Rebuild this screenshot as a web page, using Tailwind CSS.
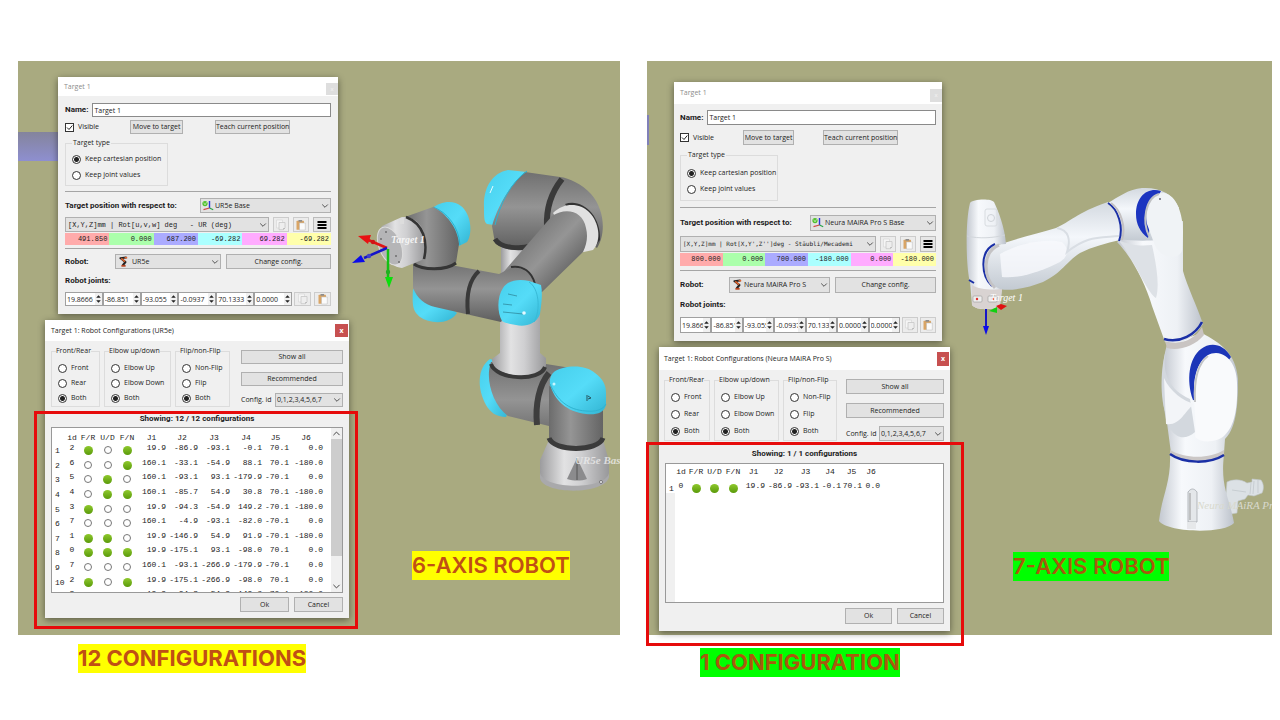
<!DOCTYPE html>
<html lang="en">
<head>
    <meta charset="UTF-8">
    <meta name="viewport" content="width=device-width, initial-scale=1.0">
    <title>6-axis vs 7-axis robot configurations</title>
    <script src="https://cdn.jsdelivr.net/npm/@tailwindcss/browser@4"></script>
</head>
<body class="bg-white font-['Open_Sans',sans-serif] text-[7px] leading-[10px] text-[#1c1c1c]">

    <!-- Shared icons -->
    <svg class="hidden">
        <symbol id="chevron" viewBox="0 0 8 8"><path d="M1.2 2.5 4 5.3 6.8 2.5" fill="none" stroke="#444" stroke-width=".9"/></symbol>
        <symbol id="frame" viewBox="0 0 12 11">
            <path d="M7.5 1v7" stroke="#2a35d8" stroke-width="1.4"/><path d="M7.5 8 1.5 9.6" stroke="#d04848" stroke-width="1.1"/><path d="M7.5 8l3.7 1.7" stroke="#27a348" stroke-width="1.2"/>
            <circle cx="3" cy="3.6" r="2.6" fill="#4fc02c"/><path d="M1.7 2.6 3 4.9l1.6-2.7" fill="none" stroke="#d9f5cf" stroke-width=".7"/>
        </symbol>
        <symbol id="arm" viewBox="0 0 10 11">
            <path d="M1.4 2.2 7 1.5M2 2.5l4.5 3.6M6.5 6 4 9" fill="none" stroke="#222" stroke-width="2" stroke-linecap="round"/>
            <path d="M2.2 2.4 6 5.6" stroke="#e2622b" stroke-width="1.5"/><path d="M5.6 1.7h2.6" stroke="#e2622b" stroke-width="1.5"/><path d="M2.4 9.8h4.2" stroke="#b5401c" stroke-width="1.8"/>
        </symbol>
        <symbol id="copy" viewBox="0 0 12 12">
            <path d="M1.5 1h6v8h-6z" fill="#f5f5f5" stroke="#d9d9d9" stroke-width=".7"/><path d="M4 3.5h6V9l-1.6 1.7H4z" fill="#eee" stroke="#c6c6c6" stroke-width=".8"/><path d="M10 9H8.4v1.7z" fill="#aaa"/>
        </symbol>
        <symbol id="paste" viewBox="0 0 12 12">
            <rect x="1.5" y="1.8" width="7.5" height="9" rx=".6" fill="#d9a566"/><path d="M3.5 1h3.6v1.7H3.5z" fill="#8d8d8d"/><path d="M4.5 4h5.8v7H4.5z" fill="#fbfbfb" stroke="#b9b9b9" stroke-width=".5"/>
        </symbol>
        <symbol id="bars" viewBox="0 0 12 12"><path d="M1.5 3h9M1.5 6h9M1.5 9h9" stroke="#000" stroke-width="2"/></symbol>
        <symbol id="spin" viewBox="0 0 7 12"><path d="M3.5 2.2 5.8 4.8H1.2zM3.5 9.8 5.8 7.2H1.2z" fill="#222"/></symbol>
    </svg>

    <main class="grid grid-cols-[602fr_625fr] gap-x-[27px] pt-[61px] pl-[18px] pr-2">

        <!-- 6-axis robot -->
        <figure>
            <div class="relative h-[574px] bg-[#a9aa80]">
                <svg class="absolute inset-0 size-full" viewBox="18 61 602 574" preserveAspectRatio="xMinYMin slice">
                    <defs>
                        <linearGradient id="beam" x1="0" y1="0" x2="0" y2="1"><stop offset="0" stop-color="#84849c"/><stop offset="1" stop-color="#8e8fd0"/></linearGradient>
                        <linearGradient id="steel"><stop offset="0" stop-color="#9c9c9e"/><stop offset=".35" stop-color="#e2e2e3"/><stop offset=".6" stop-color="#cfcfd1"/><stop offset="1" stop-color="#98989a"/></linearGradient>
                        <linearGradient id="dark"><stop offset="0" stop-color="#6c6c6c"/><stop offset=".4" stop-color="#959595"/><stop offset="1" stop-color="#646464"/></linearGradient>
                        <linearGradient id="darkV" x1="0" y1="0" x2="0" y2="1"><stop offset="0" stop-color="#707070"/><stop offset=".45" stop-color="#949494"/><stop offset="1" stop-color="#5e5e5e"/></linearGradient>
                        <linearGradient id="tube" gradientUnits="userSpaceOnUse" x1="524" y1="240" x2="562" y2="276"><stop offset="0" stop-color="#7c7c7c"/><stop offset=".5" stop-color="#959595"/><stop offset="1" stop-color="#6c6c6c"/></linearGradient>
                        <linearGradient id="cyan" x1="0" y1="0" x2="1" y2="1"><stop offset="0" stop-color="#46cfec"/><stop offset=".5" stop-color="#55dcf8"/><stop offset="1" stop-color="#32b4d2"/></linearGradient>
                    </defs>
                    <path d="M18 132h42v29H18z" fill="url(#beam)"/>

                    <!-- base and shoulder -->
                    <path d="M549 440 540 460v18c3 16 66 16 69-2v-15l-6-21z" fill="url(#steel)"/>
                    <path d="M540 473c4 17 66 17 69 0v4c-4 18-66 18-69 1z" fill="#a9a9ab"/>
                    <path d="M577 458 567 479c7 2 14 2 20 0z" fill="#8b8b8d"/><path d="M577 458v22" stroke="#555"/><circle cx="601" cy="482" r="1.5" fill="#eee" stroke="#444" stroke-width=".6"/>
                    <path d="M490 359c-13 9-13 30-4 46 4 7 10 12 20 12l4-10-14-46z" fill="url(#cyan)"/>
                    <path d="M491 362c-6 16 1 42 17 54l41 10v12c4 11 50 11 54 0v-40l-32-30-25-4z" fill="url(#darkV)"/>
                    <path d="M549 386v52c4 11 50 11 54 0v-33l-30-12z" fill="url(#dark)"/>
                    <path d="M549 438c5 14 49 14 54 0" fill="none" stroke="#3b3b3b" stroke-width="5"/>
                    <path d="M549 373c-10 12-14 32-12 52" fill="none" stroke="#3e3e3e" stroke-width="6"/>
                    <path d="M550 384c-1-8 3-14 13-16 13-3 25-1 32 5 8 6 11 12 11 20v11c-1 10-12 11-20 10-19-2-32-14-36-30z" fill="url(#cyan)"/>
                    <path d="M550 384c7 16 18 26 36 27 9 1 17-1 20-7" fill="none" stroke="#2fb3d0"/>
                    <path d="M587 395v6M588 396l3 2-3 1" fill="none" stroke="#24545f"/><circle cx="554" cy="384" r="1.5" fill="#c8f6ff"/>

                    <!-- lower arm -->
                    <path d="M500 315v38l-8 6c-2 20 52 22 54 6v-7l-6-5v-40z" fill="url(#steel)"/>
                    <path d="M491 364c5 16 49 18 54 3" fill="none" stroke="#393939" stroke-width="4"/>
                    <path d="M501 243v34h27v-30z" fill="url(#steel)"/>

                    <!-- elbow -->
                    <path d="M508 170c-16 3-25 18-24 38 0 9 0 14 3 16l14 2 26-54z" fill="url(#cyan)"/>
                    <path d="M525 172c-14 12-27 33-33 54l3 17c10 9 30 8 38 4l24-28 40 29c9-14 8-38-6-54-9-10-22-16-31-17z" fill="url(#darkV)"/>
                    <path d="M562 179c-12 15-16 30-15 48" fill="none" stroke="#3a3a3a" stroke-width="6"/>
                    <path d="M495 239c6 10 26 10 36 7" fill="none" stroke="#383838" stroke-width="5"/>
                    <path d="M565 204c16-6 36 10 35 36l-4 5-20-26z" fill="#333"/>
                    <path d="M553 213c11-11 27-10 36-1 10 10 13 28 4 38l-14 3z" fill="#e1e1e1"/>
                    <path d="M552 216c14-9 31-5 34 12 2 8 1 16-3 24l-41 40-8 4-34-20z" fill="url(#tube)"/>
                    <path d="M527 171c-16 11-27 33-32 54" fill="none" stroke="#29b4d2"/><path d="M490 193l3-7" stroke="#e6fbff"/>

                    <!-- wrist -->
                    <path d="M413 289c-1 18 0 22 7 28 10 7 29 8 37-4l-14-12z" fill="url(#cyan)"/>
                    <path d="M413 264v24c4 10 12 17 22 19l66 15 6-10 28-28c-5-14-16-17-24-16l-12 6-43-8-43-4z" fill="url(#darkV)"/>
                    <path d="M511 267c12-2 21 5 24 17" fill="none" stroke="#333" stroke-width="2"/>
                    <path d="M479 271c-10 9-13 24-11 43" fill="none" stroke="#393939" stroke-width="4"/>
                    <path d="M502 321c-5-9-5-24 1-33 5-8 16-9 26-7l12 4c2 9 0 22-1 29-4 11-16 13-24 11-6-1-11-2-14-4z" fill="url(#cyan)"/>
                    <path d="M508 294l9 2M503 304l9 1M503 312l20 2" stroke="#2b7f92" stroke-width=".7"/><circle cx="524" cy="313" r="1.8" fill="#e5f9ff"/>
                    <path d="M529 282c10 6 12 28 5 40" fill="none" stroke="#38bad7"/>
                    <path d="M433 208c6-6 20-9 28-2 10 8 12 27 6 36l-8 4z" fill="url(#cyan)"/>
                    <path d="M433 207c14 5 26 20 27 38" fill="none" stroke="#2bb0cd"/>
                    <path d="M405 217l28-10c13 6 25 21 26 37l-3 19c-6 8-34 9-43 1v-6z" fill="url(#dark)"/>
                    <path d="M414 264c8 6 32 7 42-1" fill="none" stroke="#353535" stroke-width="3"/>
                    <path d="M382 226l20-9c13-1 22 9 23 21 1 9 0 17-3 22l-20 8c-16-1-30-28-20-42z" fill="url(#steel)"/>
                    <path d="M406 217c18 7 22 25 18 42" fill="none" stroke="#353535" stroke-width="2.5"/>
                    <path d="M400 218h4v6h-4z" fill="#ddd"/>
                    <ellipse cx="390" cy="246" rx="11" ry="20" transform="rotate(-22 390 246)" fill="#b5b5b7" stroke="#ddd"/>
                    <g fill="#6f6f6f"><circle cx="386" cy="232" r="1"/><circle cx="381" cy="239" r="1"/><circle cx="396" cy="256" r="1"/><circle cx="399" cy="262" r="1"/></g>

                    <!-- target axes -->
                    <path d="M387 248 366 239" stroke="#e01515" stroke-width="2.5"/><circle cx="373" cy="242" r="2.2" fill="#d01515"/><path d="M358 236l13-1-3 9z" fill="#e81212"/>
                    <path d="M387 248 364 258" stroke="#1515c8" stroke-width="2.5"/><circle cx="369" cy="256" r="2.2" fill="#4040c8"/><path d="M352 263l9-8 4 7z" fill="#0b0bea"/>
                    <path d="M388 249v29" stroke="#14c014" stroke-width="2.5"/><circle cx="388" cy="272" r="2.2" fill="#20b020"/><path d="M389 288l-4-11h8z" fill="#0be00b"/>
                    <text x="391" y="243" class="font-['Liberation_Serif',serif] text-[10px] font-bold italic" fill="#f4f4f4">Target 1</text>
                    <text x="575" y="464" class="font-['Liberation_Serif',serif] text-[11px] font-bold italic" fill="#ededed" fill-opacity=".8">UR5e Base</text>
                </svg>

                <!-- Target dialog -->
                <section class="absolute left-[40px] top-[16px] w-[280px] bg-[#f0f0f0] shadow-[0_2px_7px_#0007]">
                    <header class="flex h-[19px] items-center justify-between bg-white pl-1.5 text-[#8c8c8c]">
                        <h2>Target 1</h2>
                        <button class="mt-1 h-3 w-3 bg-[#dedede] text-[6px] text-[#f5f5f5]" aria-label="Close">x</button>
                    </header>
                    <form class="flex flex-col px-[7px] pt-[7px] pb-2">
                        <div class="flex h-[14px] items-center gap-1">
                            <label for="name6" class="font-['Roboto',sans-serif] text-[8px] font-bold">Name:</label>
                            <input id="name6" value="Target 1" class="h-full min-w-0 flex-1 border border-[#8a8a8a] bg-white px-px">
                        </div>
                        <div class="mt-[3px] flex h-[14px] items-center">
                            <label class="flex w-[65px] items-center gap-1">
                                <input type="checkbox" checked class="size-[9px] appearance-none border border-[#333] bg-white">
                                <svg class="absolute size-[9px]" viewBox="0 0 9 9"><path d="M2 4.5 4 6.5 7.3 2.5" fill="none" stroke="#222"/></svg>Visible
                            </label>
                            <button type="button" class="h-full w-[53px] border border-[#b0b0b0] bg-[#e2e2e2] whitespace-nowrap">Move to target</button>
                            <button type="button" class="ml-8 h-full w-[75px] border border-[#b0b0b0] bg-[#e2e2e2] whitespace-nowrap">Teach current position</button>
                        </div>
                        <fieldset class="mt-1 flex h-[48px] w-[103px] min-w-0 flex-col gap-[6px] border border-[#dcdcdc] pl-1.5">
                            <legend class="px-px">Target type</legend>
                            <label class="mt-[6px] flex items-center gap-1 whitespace-nowrap"><input type="radio" name="type6" checked class="size-[9px] shrink-0 appearance-none rounded-full border border-[#333] bg-white checked:bg-[radial-gradient(circle,#222_0_2px,white_3px)]">Keep cartesian position</label>
                            <label class="flex items-center gap-1 whitespace-nowrap"><input type="radio" name="type6" class="size-[9px] shrink-0 appearance-none rounded-full border border-[#333] bg-white checked:bg-[radial-gradient(circle,#222_0_2px,white_3px)]">Keep joint values</label>
                        </fieldset>
                        <hr class="mt-[5px] border-[#a5a5a5]">
                        <div class="mt-[6px] flex h-[15px] items-center justify-between">
                            <label for="ref6" class="font-['Roboto',sans-serif] text-[8px] font-bold">Target position with respect to:</label>
                            <div class="relative h-full w-[131px]">
                                <select id="ref6" class="size-full appearance-none border border-[#b0b0b0] bg-[#e2e2e2] pl-[14px]"><option>UR5e Base</option></select>
                                <svg class="absolute top-0.5 left-0.5 h-[11px] w-3"><use href="#frame"/></svg>
                                <svg class="absolute top-1 right-0.5 size-2"><use href="#chevron"/></svg>
                            </div>
                        </div>
                        <div class="mt-1 flex h-[15px] items-center gap-1">
                            <div class="relative h-full min-w-0 flex-1">
                                <select aria-label="Pose format" class="size-full appearance-none border border-[#b0b0b0] bg-[#e2e2e2] pl-0.5 font-['Liberation_Mono',monospace] text-[7px] whitespace-pre"><option>[X,Y,Z]mm | Rot[u,v,w] deg&nbsp;&nbsp; - UR (deg)</option></select>
                                <svg class="absolute top-1 right-0.5 size-2"><use href="#chevron"/></svg>
                            </div>
                            <button type="button" aria-label="Copy" class="grid h-full w-4 place-items-center border border-[#ccc] bg-[#ececec]"><svg class="size-3"><use href="#copy"/></svg></button>
                            <button type="button" aria-label="Paste" class="grid h-full w-4 place-items-center border border-[#ccc] bg-[#ececec]"><svg class="size-3"><use href="#paste"/></svg></button>
                            <button type="button" aria-label="Menu" class="grid h-full w-[18px] place-items-center border border-[#bbb] bg-[#e6e6e6]"><svg class="size-3"><use href="#bars"/></svg></button>
                        </div>
                        <div class="mt-px grid h-[11px] grid-cols-6 text-right font-['Liberation_Mono',monospace] text-[7px] leading-[12px] *:px-0.5">
                            <span class="bg-[#ffabab]">491.850</span><span class="bg-[#abffab]">0.000</span><span class="bg-[#ababff]">687.200</span><span class="bg-[#abffff]">-69.282</span><span class="bg-[#ffabff]">69.282</span><span class="bg-[#ffffab]">-69.282</span>
                        </div>
                        <hr class="mt-1 border-[#a5a5a5]">
                        <div class="mt-[5px] flex h-[15px] items-center">
                            <label for="robot6" class="w-[50px] font-['Roboto',sans-serif] text-[8px] font-bold">Robot:</label>
                            <div class="relative h-full w-[106px]">
                                <select id="robot6" class="size-full appearance-none border border-[#b0b0b0] bg-[#e2e2e2] pl-4"><option>UR5e</option></select>
                                <svg class="absolute top-0.5 left-1 h-[11px] w-2.5"><use href="#arm"/></svg>
                                <svg class="absolute top-1 right-0.5 size-2"><use href="#chevron"/></svg>
                            </div>
                            <button type="button" class="ml-[5px] h-full flex-1 border border-[#b0b0b0] bg-[#e2e2e2]">Change config.</button>
                        </div>
                        <p class="mt-[7px] font-['Roboto',sans-serif] text-[8px] font-bold">Robot joints:</p>
                        <div class="mt-[6px] flex h-[14px]">
                            <div data-joints="19.8666,-86.851,-93.055,-0.0937,70.1333,0.0000" class="flex min-w-0 flex-1"></div>
                            <button type="button" aria-label="Copy joints" class="ml-0.5 grid w-[17px] place-items-center border border-[#ccc] bg-[#ececec]"><svg class="size-3"><use href="#copy"/></svg></button>
                            <button type="button" aria-label="Paste joints" class="ml-[3px] grid w-[17px] place-items-center border border-[#ccc] bg-[#ececec]"><svg class="size-3"><use href="#paste"/></svg></button>
                        </div>
                    </form>
                </section>

                <!-- Configurations dialog -->
                <section class="absolute left-[27px] top-[259px] w-[304px] bg-[#f0f0f0] shadow-[0_2px_7px_#0007]">
                    <header class="flex h-[21px] items-center justify-between bg-white pr-px pl-1.5">
                        <h2>Target 1: Robot Configurations (UR5e)</h2>
                        <button class="size-[13px] bg-[#c75050] text-[7px] font-bold text-white" aria-label="Close">x</button>
                    </header>
                    <form class="px-1.5 pt-[5px] pb-1.5">
                        <div class="flex justify-between">
                            <div data-groups="conf6" class="flex gap-1 *:first:w-[49px] *:nth-2:w-[67px] *:last:w-[55px]"></div>
                            <div class="flex w-[102px] flex-col pt-1">
                                <button type="button" class="h-[14px] border border-[#b0b0b0] bg-[#e2e2e2]">Show all</button>
                                <button type="button" class="mt-2 h-[14px] border border-[#b0b0b0] bg-[#e2e2e2]">Recommended</button>
                                <div class="mt-[7px] flex h-[14px] items-center justify-between">
                                    <label for="id6" class="whitespace-nowrap">Config. id</label>
                                    <div class="relative h-full w-[68px]">
                                        <select id="id6" class="size-full appearance-none border border-[#b0b0b0] bg-[#e2e2e2] pl-px"><option>0,1,2,3,4,5,6,7</option></select>
                                        <svg class="absolute top-[3px] right-0.5 size-2"><use href="#chevron"/></svg>
                                    </div>
                                </div>
                            </div>
                        </div>
                        <p class="mt-[7px] text-center font-['Roboto',sans-serif] text-[8px] font-bold">Showing: 12 / 12 configurations</p>
                        <div class="mt-[3px] flex h-[166px] overflow-hidden border border-[#999] bg-white">
                            <div class="min-w-0 flex-1">
                                <table class="h-[175px] w-[271px] table-fixed border-collapse font-['Liberation_Mono',monospace] text-[8px] leading-[8px]">
                                    <colgroup><col class="w-[14px]"><col class="w-3"><col class="w-[20px]"><col class="w-[19px]"><col class="w-[20px]"><col class="w-[29px]"><col class="w-8"><col class="w-8"><col class="w-8"><col class="w-[27px]"><col class="w-[34px]"></colgroup>
                                    <thead><tr class="h-[14px] align-bottom"><th></th><th class="font-normal">id</th><th class="font-normal">F/R</th><th class="font-normal">U/D</th><th class="font-normal">F/N</th><th class="font-normal">J1</th><th class="font-normal">J2</th><th class="font-normal">J3</th><th class="font-normal">J4</th><th class="font-normal">J5</th><th class="font-normal">J6</th></tr></thead>
                                    <tbody id="rows6"></tbody>
                                </table>
                            </div>
                            <div class="flex w-[11px] flex-col bg-[#f0f0f0]">
                                <svg class="size-[11px] rotate-180" viewBox="-1 -1 10 10"><use href="#chevron" width="8" height="8"/></svg>
                                <div class="h-[117px] bg-[#cdcdcd]"></div>
                                <svg class="mt-auto size-[11px]" viewBox="-1 -1 10 10"><use href="#chevron" width="8" height="8"/></svg>
                            </div>
                        </div>
                        <div class="mt-1 flex justify-end gap-[5px]">
                            <button type="button" class="h-[15px] w-[49px] border border-[#b0b0b0] bg-[#e2e2e2]">Ok</button>
                            <button type="button" class="h-[15px] w-[49px] border border-[#b0b0b0] bg-[#e2e2e2]">Cancel</button>
                        </div>
                    </form>
                </section>

                <div class="absolute left-[16px] top-[350px] h-[218px] w-[324px] border-3 border-[#e60b0b]"></div>
                <p class="absolute left-[394px] top-[490px] h-[29px] bg-[#ffff00] font-['Inter',sans-serif] text-[22px] leading-[29px] font-semibold whitespace-nowrap text-[#c04f15]">6-AXIS ROBOT</p>
            </div>
            <figcaption class="mt-[9px] ml-[60px] w-fit bg-[#ffff00] font-['Inter',sans-serif] text-[22px] leading-[29px] font-bold text-[#c04f15]">12 CONFIGURATIONS</figcaption>
        </figure>

        <!-- 7-axis robot -->
        <figure>
            <div class="relative h-[574px] bg-[#a9aa80]">
                <svg class="absolute inset-0 size-full" viewBox="647 61 625 574" preserveAspectRatio="xMinYMin slice">
                    <defs>
                        <linearGradient id="white"><stop offset="0" stop-color="#c3c8d0"/><stop offset=".3" stop-color="#f7f9fc"/><stop offset=".7" stop-color="#eef1f5"/><stop offset="1" stop-color="#bcc2cb"/></linearGradient>
                        <linearGradient id="whiteV" x1="0" y1="0" x2="0" y2="1"><stop offset="0" stop-color="#d3d9e0"/><stop offset=".4" stop-color="#f4f7fb"/><stop offset="1" stop-color="#c3cad2"/></linearGradient>
                    </defs>
                    <path d="M647 115h2v30h-2z" fill="#8080b8"/>

                    <!-- base -->
                    <path d="M1227 482c6-3 14-3 20 1l5-1v-3l9 1c3 4 3 9 1 13l-8 3-6-1-3 4-7 2-1 12-6 1-6-8z" fill="#dce1e5" stroke="#c0c6ca" stroke-width=".6"/>
                    <path d="M1251 483l-1 11M1254 481l-1 13M1232 490l14 2M1258 480v13" fill="none" stroke="#bec4c9" stroke-width=".7"/>
                    <path d="M1170 455c1 28-8 40-11 66 9 12 66 13 75 2-4-24-14-36-10-68z" fill="url(#white)"/>
                    <path d="M1188 492c3-4 6-4 9 0v30h-9z" fill="#e4e7ea" stroke="#a5a9ae" stroke-width=".8"/><path d="M1190 493v27" stroke="#999"/><path d="M1187 522h9v7h-9z" fill="#e6e8ea"/>
                    <!-- lower body -->
                    <path d="M1167 345c-6 18-6 55 0 78l4 30c15 9 39 9 53 0l1-14c13-12 13-42 13-60-2-26-18-36-36-46z" fill="url(#white)"/>
                    <path d="M1166 350c-5 24 4 40 24 49l5 33c-16 14-28-3-28-15-8-18-6-52-1-67z" fill="#d3d8de"/>
                    <path d="M1164 378c6 14 20 23 30 26-10 8-14 22-28 20z" fill="#f3f5f8"/>
                    <path d="M1193 400c-7-20-4-42 8-51 9-7 22-6 30 8l-10 14-20 30z" fill="#1c35b8"/>
                    <path d="M1195 437c2-16-2-33-1-50 1-21 10-34 22-34 15 1 21 17 21 30 1 24-2 43-13 53-7 6-22 8-29 1z" fill="#f9fafc"/>
                    <path d="M1195 402c-1-20 2-38 13-46" fill="none" stroke="#c3c4c6" stroke-width="2"/>
                    <path d="M1170 450c15 9 40 9 54 0v4c-14 10-39 10-54 0z" fill="#cbc7c6"/>
                    <path d="M1170 454c14 10 40 10 54 1" fill="none" stroke="#1a2fa6" stroke-width="2.5"/>
                    <!-- middle link -->
                    <path d="M1117 242c14 14 28 40 35 64l13 36c12 5 30-4 38-18-6-18-16-38-20-53v-50l-50 10z" fill="url(#white)"/>
                    <path d="M1118 240c14 6 24 6 34 5 4 18 8 40 4 53-10-6-24-44-38-58z" fill="#dde1e6"/>
                    <path d="M1165 341c16 5 30-2 37-14l2 8c-10 12-26 16-37 13z" fill="#c9c4c2"/>
                    <path d="M1164 339c16 5 32-5 38-17" fill="none" stroke="#1a2fa6" stroke-width="2.5"/>
                    <!-- elbow -->
                    <path d="M1108 203c10-6 21-14 34-15 17-1 30 5 37 20l-21 32c-10 1-27 1-39-1z" fill="url(#whiteV)"/>
                    <path d="M1161 191c-14-4-25 6-25 23 0 10 4 18 12 24l6-34z" fill="#1c35c0"/>
                    <path d="M1147 224c-4-20 5-31 17-31 13 2 19 22 19 39l-1 19c-5 11-23 6-28-8z" fill="#f0f3f6"/>
                    <path d="M1149 236c-7-14-4-38 10-42" fill="none" stroke="#bfc1c4" stroke-width="2"/><circle cx="1160" cy="199" r="1" fill="#667"/>
                    <!-- forearm -->
                    <path d="M990 248c20-8 46-14 66-20 14-6 20-15 52-26 10 8 16 24 12 38-14 3-28 7-40 13-12 7-18 20-37 29-18 7-42 12-54 3-10-10-10-28 1-37z" fill="url(#whiteV)"/>
                    <path d="M1000 254c18-11 46-16 62-12 7 6 7 14-2 20-18 9-40 17-58 15z" fill="#f7f9fc" fill-opacity=".8"/>
                    <path d="M1057 228c12 2 14 12 10 24 20-16 30-14 52-16" fill="none" stroke="#d9dee4" stroke-width="2"/>
                    <path d="M1108 203c10 6 16 24 11 38" fill="none" stroke="#1a2fa6" stroke-width="2"/><path d="M1111 203c10 7 15 24 11 37" fill="none" stroke="#c4c1c2" stroke-width="2"/>
                    <!-- wrist -->
                    <path d="M970 203c2-4 21-5 24-1 4 8 11 26 12 42-12 0-20 4-22 20 0 10 3 20 10 22l8 4-2 15c-3 5-24 6-28 0l-2-23c-4-14-5-60 0-79z" fill="url(#white)"/>
                    <path d="M967 236c12 3 26 2 38-1" fill="none" stroke="#d2d6db"/><rect x="985" y="209" width="12" height="17" rx="2" fill="none" stroke="#d8dce0"/><circle cx="991" cy="218" r="3.5" fill="none" stroke="#cfd3d8"/>
                    <path d="M995 244c-16 7-14 32-3 42" fill="none" stroke="#1a2fa6" stroke-width="2"/><path d="M999 245c-17 7-16 32-4 43" fill="none" stroke="#c4c3c5" stroke-width="3"/>
                    <path d="M969 280l5 3" stroke="#1a2fa6" stroke-width="2"/>
                    <path d="M972 285c8 5 20 5 30 4l-2 16c-4 5-24 6-28 0z" fill="#d9d3d2"/>
                    <rect x="973" y="296" width="9" height="6" rx="1" fill="#eee" stroke="#999" stroke-width=".6"/><rect x="988" y="296" width="9" height="6" rx="1" fill="#eee" stroke="#999" stroke-width=".6"/>
                    <circle cx="977" cy="299" r="1.2" fill="#d33"/><circle cx="993" cy="299" r="1.2" fill="#d33"/>
                    <!-- target axes -->
                    <path d="M986 309v18" stroke="#1515c8" stroke-width="2"/><path d="M986 335l-3-9h6z" fill="#0b0bea"/>
                    <path d="M989 311l8-4v6z" fill="#10d010"/><path d="M996 306l5-2 6 2-6 4z" fill="#e01010"/>
                    <text x="990" y="301" class="font-['Liberation_Serif',serif] text-[10px] italic" fill="#fff">Target 1</text>
                    <text x="1197" y="509" class="font-['Liberation_Serif',serif] text-[11px] italic" fill="#d8d9cd">Neura MAiRA Pro S Base</text>
                </svg>

                <!-- Target dialog -->
                <section class="absolute left-[27px] top-[21px] w-[268px] bg-[#f0f0f0] shadow-[0_2px_7px_#0007]">
                    <header class="flex h-[22px] items-center justify-between bg-white pl-1.5 text-[#8c8c8c]">
                        <h2>Target 1</h2>
                        <button class="mt-1 h-[13px] w-3 bg-[#dedede] text-[6px] text-[#f5f5f5]" aria-label="Close">x</button>
                    </header>
                    <form class="flex flex-col px-1.5 pt-[6px] pb-2">
                        <div class="flex h-[15px] items-center gap-1">
                            <label for="name7" class="font-['Roboto',sans-serif] text-[8px] font-bold">Name:</label>
                            <input id="name7" value="Target 1" class="h-full min-w-0 flex-1 border border-[#8a8a8a] bg-white px-px">
                        </div>
                        <div class="mt-[5px] flex h-[15px] items-center">
                            <label class="flex w-[63px] items-center gap-1">
                                <input type="checkbox" checked class="size-[9px] appearance-none border border-[#333] bg-white">
                                <svg class="absolute size-[9px]" viewBox="0 0 9 9"><path d="M2 4.5 4 6.5 7.3 2.5" fill="none" stroke="#222"/></svg>Visible
                            </label>
                            <button type="button" class="h-full w-[51px] border border-[#b0b0b0] bg-[#e2e2e2] whitespace-nowrap">Move to target</button>
                            <button type="button" class="ml-[29px] h-full w-[75px] border border-[#b0b0b0] bg-[#e2e2e2] whitespace-nowrap">Teach current position</button>
                        </div>
                        <fieldset class="mt-[5px] flex h-[51px] w-[98px] min-w-0 flex-col gap-[6px] border border-[#dcdcdc] pl-1.5">
                            <legend class="px-px">Target type</legend>
                            <label class="mt-2 flex items-center gap-1 whitespace-nowrap"><input type="radio" name="type7" checked class="size-[9px] shrink-0 appearance-none rounded-full border border-[#333] bg-white checked:bg-[radial-gradient(circle,#222_0_2px,white_3px)]">Keep cartesian position</label>
                            <label class="flex items-center gap-1 whitespace-nowrap"><input type="radio" name="type7" class="size-[9px] shrink-0 appearance-none rounded-full border border-[#333] bg-white checked:bg-[radial-gradient(circle,#222_0_2px,white_3px)]">Keep joint values</label>
                        </fieldset>
                        <hr class="mt-[6px] border-[#a5a5a5]">
                        <div class="mt-[7px] flex h-4 items-center justify-between">
                            <label for="ref7" class="font-['Roboto',sans-serif] text-[8px] font-bold">Target position with respect to:</label>
                            <div class="relative h-full w-[126px]">
                                <select id="ref7" class="size-full appearance-none border border-[#b0b0b0] bg-[#e2e2e2] pl-[14px]"><option>Neura MAiRA Pro S Base</option></select>
                                <svg class="absolute top-0.5 left-0.5 h-[11px] w-3"><use href="#frame"/></svg>
                                <svg class="absolute top-1 right-0.5 size-2"><use href="#chevron"/></svg>
                            </div>
                        </div>
                        <div class="mt-[5px] flex h-4 items-center gap-1">
                            <div class="relative h-full min-w-0 flex-1">
                                <select aria-label="Pose format" class="size-full appearance-none border border-[#b0b0b0] bg-[#e2e2e2] pl-0.5 font-['DejaVu_Sans_Mono',monospace] text-[6px]"><option>[X,Y,Z]mm | Rot[X,Y',Z'']deg - Stäubli/Mecademi</option></select>
                                <svg class="absolute top-1 right-0.5 size-2"><use href="#chevron"/></svg>
                            </div>
                            <button type="button" aria-label="Copy" class="grid h-full w-4 place-items-center border border-[#ccc] bg-[#ececec]"><svg class="size-3"><use href="#copy"/></svg></button>
                            <button type="button" aria-label="Paste" class="grid h-full w-4 place-items-center border border-[#ccc] bg-[#ececec]"><svg class="size-3"><use href="#paste"/></svg></button>
                            <button type="button" aria-label="Menu" class="grid h-full w-4 place-items-center border border-[#bbb] bg-[#e6e6e6]"><svg class="size-3"><use href="#bars"/></svg></button>
                        </div>
                        <div class="mt-px grid h-[13px] grid-cols-6 text-right font-['Liberation_Mono',monospace] text-[7px] leading-[13px] *:px-0.5">
                            <span class="bg-[#ffabab]">800.000</span><span class="bg-[#abffab]">0.000</span><span class="bg-[#ababff]">700.000</span><span class="bg-[#abffff]">-180.000</span><span class="bg-[#ffabff]">0.000</span><span class="bg-[#ffffab]">-180.000</span>
                        </div>
                        <hr class="mt-1 border-[#a5a5a5]">
                        <div class="mt-[6px] flex h-4 items-center">
                            <label for="robot7" class="w-[49px] font-['Roboto',sans-serif] text-[8px] font-bold">Robot:</label>
                            <div class="relative h-full w-[101px]">
                                <select id="robot7" class="size-full appearance-none border border-[#b0b0b0] bg-[#e2e2e2] pl-[14px]"><option>Neura MAiRA Pro S</option></select>
                                <svg class="absolute top-0.5 left-1 h-[11px] w-2.5"><use href="#arm"/></svg>
                                <svg class="absolute top-1 right-0.5 size-2"><use href="#chevron"/></svg>
                            </div>
                            <button type="button" class="ml-[5px] h-full flex-1 border border-[#b0b0b0] bg-[#e2e2e2]">Change config.</button>
                        </div>
                        <p class="mt-[7px] font-['Roboto',sans-serif] text-[8px] font-bold">Robot joints:</p>
                        <div class="mt-[7px] flex h-4">
                            <div data-joints="19.866,-86.851,-93.055,-0.0937,70.133,0.0000,0.0000" class="flex min-w-0 flex-1"></div>
                            <button type="button" aria-label="Copy joints" class="ml-0.5 grid w-4 place-items-center border border-[#ccc] bg-[#ececec]"><svg class="size-3"><use href="#copy"/></svg></button>
                            <button type="button" aria-label="Paste joints" class="ml-0.5 grid w-4 place-items-center border border-[#ccc] bg-[#ececec]"><svg class="size-3"><use href="#paste"/></svg></button>
                        </div>
                    </form>
                </section>

                <!-- Configurations dialog -->
                <section class="absolute left-[12px] top-[286px] w-[291px] bg-[#f0f0f0] shadow-[0_2px_7px_#0007]">
                    <header class="flex h-[23px] items-center justify-between bg-white pr-px pl-[5px]">
                        <h2>Target 1: Robot Configurations (Neura MAiRA Pro S)</h2>
                        <button class="h-[14px] w-3 bg-[#c75050] text-[7px] font-bold text-white" aria-label="Close">x</button>
                    </header>
                    <form class="px-1.5 pt-[5px] pb-[7px]">
                        <div class="flex justify-between">
                            <div data-groups="conf7" class="-ml-px flex gap-1 *:first:w-[46px] *:nth-2:w-[65px] *:last:w-[54px]"></div>
                            <div class="flex w-[98px] flex-col pt-1">
                                <button type="button" class="h-[15px] border border-[#b0b0b0] bg-[#e2e2e2]">Show all</button>
                                <button type="button" class="mt-[9px] h-[15px] border border-[#b0b0b0] bg-[#e2e2e2]">Recommended</button>
                                <div class="mt-[8px] flex h-[15px] items-center justify-between">
                                    <label for="id7" class="whitespace-nowrap">Config. id</label>
                                    <div class="relative h-full w-[65px]">
                                        <select id="id7" class="size-full appearance-none border border-[#b0b0b0] bg-[#e2e2e2] pl-px"><option>0,1,2,3,4,5,6,7</option></select>
                                        <svg class="absolute top-1 right-0.5 size-2"><use href="#chevron"/></svg>
                                    </div>
                                </div>
                            </div>
                        </div>
                        <p class="mt-[8px] text-center font-['Roboto',sans-serif] text-[8px] font-bold">Showing: 1 / 1 configurations</p>
                        <div class="mt-1 flex h-[140px] overflow-hidden border border-[#999] bg-white">
                            <div class="relative w-full">
                                <div class="absolute inset-y-0 left-0 w-[9px] bg-[#f0f0f0]"></div>
                                <table class="relative w-[214px] table-fixed border-collapse font-['Liberation_Mono',monospace] text-[8px] leading-[8px]">
                                    <colgroup><col class="w-[9px]"><col class="w-3"><col class="w-[18px]"><col class="w-[19px]"><col class="w-[18px]"><col class="w-[23px]"><col class="w-[27px]"><col class="w-[27px]"><col class="w-[22px]"><col class="w-[21px]"><col class="w-[18px]"></colgroup>
                                    <thead><tr class="h-4 bg-white"><th></th><th class="font-normal">id</th><th class="font-normal">F/R</th><th class="font-normal">U/D</th><th class="font-normal">F/N</th><th class="font-normal">J1</th><th class="font-normal">J2</th><th class="font-normal">J3</th><th class="font-normal">J4</th><th class="font-normal">J5</th><th class="font-normal">J6</th></tr></thead>
                                    <tbody id="rows7"></tbody>
                                </table>
                            </div>
                        </div>
                        <div class="mt-[5px] flex justify-end gap-[5px]">
                            <button type="button" class="h-4 w-[47px] border border-[#b0b0b0] bg-[#e2e2e2]">Ok</button>
                            <button type="button" class="h-4 w-[47px] border border-[#b0b0b0] bg-[#e2e2e2]">Cancel</button>
                        </div>
                    </form>
                </section>

                <div class="absolute -left-px top-[381px] h-[204px] w-[318px] border-3 border-[#e60b0b]"></div>
                <p class="absolute left-[366px] top-[491px] h-[29px] bg-[#00ff00] font-['Inter',sans-serif] text-[22px] leading-[29px] font-semibold whitespace-nowrap text-[#a8590d]">7-AXIS ROBOT</p>
            </div>
            <figcaption class="mt-[13px] ml-[53px] w-fit bg-[#00ff00] font-['Inter',sans-serif] text-[22px] leading-[29px] font-bold text-[#a8590d]">1 CONFIGURATION</figcaption>
        </figure>
    </main>

    <script>
        // id, front/rear, up/down, flip, J1..J6
        const configs6 = [
            [2, 1, 0, 1, '19.9', '-86.9', '-93.1', '-0.1', '70.1', '0.0'],
            [6, 0, 0, 1, '160.1', '-33.1', '-54.9', '88.1', '70.1', '-180.0'],
            [5, 0, 1, 0, '160.1', '-93.1', '93.1', '-179.9', '-70.1', '0.0'],
            [4, 0, 1, 1, '160.1', '-85.7', '54.9', '30.8', '70.1', '-180.0'],
            [3, 1, 0, 0, '19.9', '-94.3', '-54.9', '149.2', '-70.1', '-180.0'],
            [7, 0, 0, 0, '160.1', '-4.9', '-93.1', '-82.0', '-70.1', '0.0'],
            [1, 1, 1, 0, '19.9', '-146.9', '54.9', '91.9', '-70.1', '-180.0'],
            [0, 1, 1, 1, '19.9', '-175.1', '93.1', '-98.0', '70.1', '0.0'],
            [7, 0, 0, 0, '160.1', '-93.1', '-266.9', '-179.9', '-70.1', '0.0'],
            [2, 1, 0, 1, '19.9', '-175.1', '-266.9', '-98.0', '70.1', '0.0'],
            [3, 1, 0, 0, '19.9', '-94.3', '-54.9', '149.2', '-70.1', '-180.0']
        ];
        const configs7 = [[0, 1, 1, 1, '19.9', '-86.9', '-93.1', '-0.1', '70.1', '0.0']];

        const dot = on => on
            ? '<span class="mx-auto block size-[9px] rounded-full bg-linear-to-b from-[#8fc92c] to-[#5a9a08]"></span>'
            : '<span class="mx-auto block size-2 rounded-full border border-[#777] bg-white"></span>';

        function fillRows(id, rows) {
            document.getElementById(id).innerHTML = rows.map((r, i) => `
                <tr class="align-top">
                    <td class="bg-white pt-[5px] pl-[3px] whitespace-nowrap">${i + 1}</td>
                    <td class="pt-0.5 text-center">${r[0]}</td>
                    ${r.slice(1, 4).map(v => `<td class="pt-1">${dot(v)}</td>`).join('')}
                    ${r.slice(4).map(v => `<td class="pt-0.5"><div class="flex justify-end">${v}</div></td>`).join('')}
                </tr>`).join('');
        }
        fillRows('rows6', configs6);
        fillRows('rows7', configs7);

        // joint spin boxes
        document.querySelectorAll('[data-joints]').forEach(el => {
            el.innerHTML = el.dataset.joints.split(',').map((v, i) => `
                <div class="flex min-w-0 flex-1 items-center border border-[#a0a0a0] bg-white">
                    <input aria-label="Joint ${i + 1}" value="${v}" class="h-full w-0 min-w-0 flex-1 pl-px">
                    <svg class="h-full w-[7px] shrink-0 bg-[#f0f0f0]"><use href="#spin"/></svg>
                </div>`).join('');
        });

        // filter groups
        const groups = [
            ['Front/Rear', 'Front', 'Rear', 'Both'],
            ['Elbow up/down', 'Elbow Up', 'Elbow Down', 'Both'],
            ['Flip/non-Flip', 'Non-Flip', 'Flip', 'Both']
        ];
        document.querySelectorAll('[data-groups]').forEach(el => {
            const gap = el.dataset.groups === 'conf6' ? 'gap-[5px]' : 'gap-[7px]';
            el.innerHTML = groups.map(([title, ...opts], g) => `
                <fieldset class="flex min-w-0 flex-col ${gap} border border-[#dcdcdc] pb-px pl-1.5 whitespace-nowrap">
                    <legend class="-ml-0.5">${title}</legend>
                    ${opts.map(o => `<label class="flex items-center gap-1 first-of-type:mt-[7px]"><input type="radio" name="${el.dataset.groups}-${g}" ${o === 'Both' ? 'checked' : ''} class="size-[9px] shrink-0 appearance-none rounded-full border border-[#333] bg-white checked:bg-[radial-gradient(circle,#222_0_2px,white_3px)]">${o}</label>`).join('')}
                </fieldset>`).join('');
        });
    </script>
</body>
</html>
